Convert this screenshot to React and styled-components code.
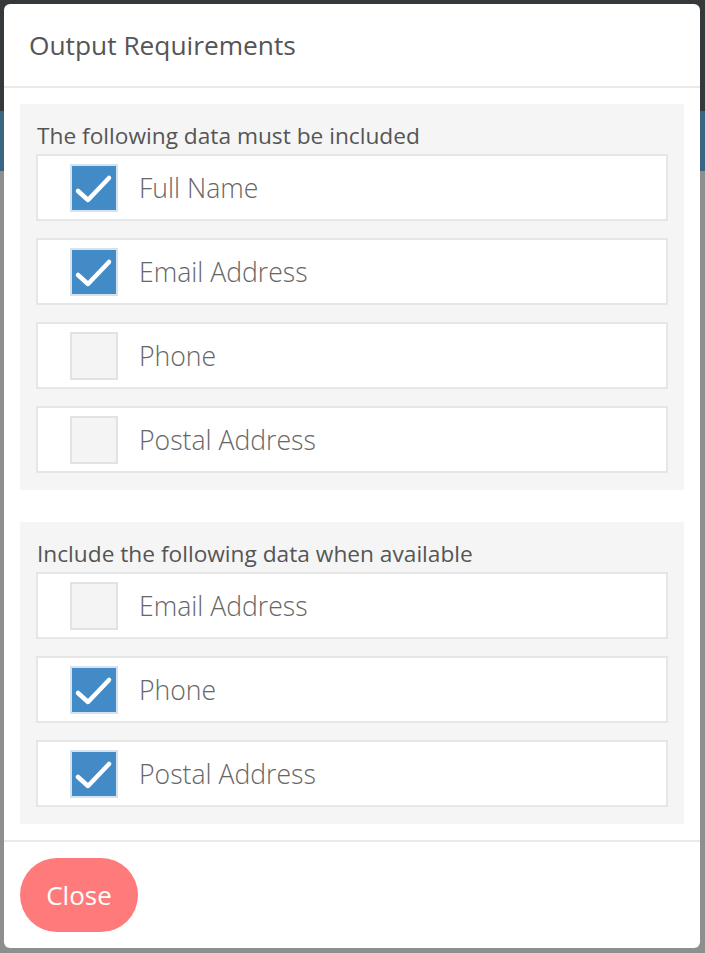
import React, { useState } from "react";
import styled, { createGlobalStyle } from "styled-components";

const GlobalStyle = createGlobalStyle`
  html, body {
    margin: 0;
    padding: 0;
  }
  body {
    font-family: "Open Sans", "Liberation Sans", sans-serif;
    background: linear-gradient(
      to bottom,
      #35393b 0,
      #35393b 111px,
      #3c6483 111px,
      #3c6483 171px,
      #8e8e8e 171px
    );
    min-height: 953px;
  }
  * {
    box-sizing: border-box;
  }
`;

const requiredFields = [
  { id: "req-name", label: "Full Name", checked: true },
  { id: "req-email", label: "Email Address", checked: true },
  { id: "req-phone", label: "Phone", checked: false },
  { id: "req-postal", label: "Postal Address", checked: false },
];

const optionalFields = [
  { id: "opt-email", label: "Email Address", checked: false },
  { id: "opt-phone", label: "Phone", checked: true },
  { id: "opt-postal", label: "Postal Address", checked: true },
];

const Backdrop = styled.div`
  padding: 4px 5px 5px 4px;
`;

const Modal = styled.div`
  width: 696px;
  height: 944px;
  background: #fff;
  border-radius: 6px;
  display: flex;
  flex-direction: column;
  overflow: hidden;
`;

const Header = styled.div`
  height: 84px;
  padding: 0 25px;
  display: flex;
  align-items: center;
  border-bottom: 2px solid #e9e9e9;
`;

const Title = styled.h4`
  margin: 0;
  font-size: 26.3px;
  font-weight: 400;
  color: #555;
`;

const Body = styled.div`
  flex: 1;
  padding: 16px;
  display: flex;
  flex-direction: column;
  gap: 32px;
  border-bottom: 2px solid #e9e9e9;
`;

const Panel = styled.div`
  background: #f5f5f5;
  padding: 18px 16px 17px;
`;

const PanelLabel = styled.div`
  font-size: 22.7px;
  line-height: 28px;
  color: #555;
  margin-left: 1px;
  margin-bottom: 4px;
`;

const List = styled.div`
  display: flex;
  flex-direction: column;
  gap: 17px;
`;

const Row = styled.label`
  height: 67px;
  background: #fff;
  border: 2px solid #e6e6e6;
  display: flex;
  align-items: center;
  padding-left: 32px;
  cursor: pointer;
`;

const Box = styled.span`
  width: 48px;
  height: 48px;
  flex: none;
  display: flex;
  align-items: center;
  justify-content: center;
  background: ${(p) => (p.$checked ? "#428bc6" : "#f4f4f4")};
  border: 2px solid ${(p) => (p.$checked ? "#d4e3ef" : "#e2e2e2")};
`;

const ItemText = styled.span`
  margin-left: 21px;
  font-size: 26.6px;
  font-weight: 300;
  color: #666;
`;

const Footer = styled.div`
  padding: 16px;
  display: flex;
`;

const CloseButton = styled.button`
  width: 118px;
  height: 74px;
  border: none;
  border-radius: 37px;
  background: #ff7b7b;
  color: #fff;
  font-family: inherit;
  font-size: 26px;
  cursor: pointer;
`;

function Check() {
  return (
    <svg width="44" height="44" viewBox="0 0 44 44">
      <path
        d="M6 25 L16 34 L37 12"
        fill="none"
        stroke="#fff"
        strokeWidth="4.5"
        strokeLinecap="round"
        strokeLinejoin="round"
      />
    </svg>
  );
}

function FieldList({ items, onToggle }) {
  return (
    <List>
      {items.map((f) => (
        <Row key={f.id} onClick={() => onToggle(f.id)}>
          <Box $checked={f.checked}>{f.checked && <Check />}</Box>
          <ItemText>{f.label}</ItemText>
        </Row>
      ))}
    </List>
  );
}

export default function App() {
  const [req, setReq] = useState(requiredFields);
  const [opt, setOpt] = useState(optionalFields);

  const toggle = (setter) => (id) =>
    setter((list) =>
      list.map((f) => (f.id === id ? { ...f, checked: !f.checked } : f))
    );

  return (
    <>
      <GlobalStyle />
      <Backdrop>
        <Modal>
          <Header>
            <Title>Output Requirements</Title>
          </Header>
          <Body>
            <Panel>
              <PanelLabel>The following data must be included</PanelLabel>
              <FieldList items={req} onToggle={toggle(setReq)} />
            </Panel>
            <Panel>
              <PanelLabel>Include the following data when available</PanelLabel>
              <FieldList items={opt} onToggle={toggle(setOpt)} />
            </Panel>
          </Body>
          <Footer>
            <CloseButton>Close</CloseButton>
          </Footer>
        </Modal>
      </Backdrop>
    </>
  );
}
